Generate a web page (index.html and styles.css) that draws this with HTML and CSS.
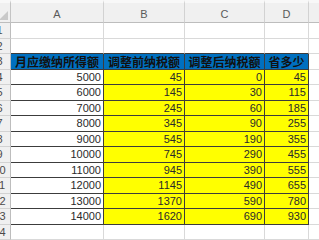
FILE: index.html
```html
<!DOCTYPE html>
<html>
<head>
<meta charset="utf-8">
<link rel="stylesheet" href="styles.css">
</head>
<body>
<div class="sheet">
  <div class="corner"><svg class="selall" width="9" height="9" viewBox="0 0 9 9"><polygon points="9,0 9,9 0,9" fill="#c9c9c9"/></svg></div>
  <div class="ch">A</div><div class="ch">B</div><div class="ch">C</div><div class="ch">D</div><div class="ch"></div>

  <div class="rh">1</div><div class="c"></div><div class="c"></div><div class="c"></div><div class="c"></div><div class="c"></div>
  <div class="rh">2</div><div class="c ab"></div><div class="c ab"></div><div class="c ab"></div><div class="c ab"></div><div class="c"></div>

  <div class="rh">3</div><div class="c t hd">月应缴纳所得额</div><div class="c t hd">调整前纳税额</div><div class="c t hd">调整后纳税额</div><div class="c t hd">省多少</div><div class="c"></div>

  <div class="rh">4</div><div class="c t n">5000</div><div class="c t n y">45</div><div class="c t n y">0</div><div class="c t n y">45</div><div class="c"></div>
  <div class="rh">5</div><div class="c t n">6000</div><div class="c t n y">145</div><div class="c t n y">30</div><div class="c t n y">115</div><div class="c"></div>
  <div class="rh">6</div><div class="c t n">7000</div><div class="c t n y">245</div><div class="c t n y">60</div><div class="c t n y">185</div><div class="c"></div>
  <div class="rh">7</div><div class="c t n">8000</div><div class="c t n y">345</div><div class="c t n y">90</div><div class="c t n y">255</div><div class="c"></div>
  <div class="rh">8</div><div class="c t n">9000</div><div class="c t n y">545</div><div class="c t n y">190</div><div class="c t n y">355</div><div class="c"></div>
  <div class="rh">9</div><div class="c t n">10000</div><div class="c t n y">745</div><div class="c t n y">290</div><div class="c t n y">455</div><div class="c"></div>
  <div class="rh">10</div><div class="c t n">11000</div><div class="c t n y">945</div><div class="c t n y">390</div><div class="c t n y">555</div><div class="c"></div>
  <div class="rh">11</div><div class="c t n">12000</div><div class="c t n y">1145</div><div class="c t n y">490</div><div class="c t n y">655</div><div class="c"></div>
  <div class="rh">12</div><div class="c t n">13000</div><div class="c t n y">1370</div><div class="c t n y">590</div><div class="c t n y">780</div><div class="c"></div>
  <div class="rh">13</div><div class="c t n">14000</div><div class="c t n y">1620</div><div class="c t n y">690</div><div class="c t n y">930</div><div class="c"></div>

  <div class="rh">14</div><div class="c"></div><div class="c"></div><div class="c"></div><div class="c"></div><div class="c"></div>
</div>
</body>
</html>
```

FILE: styles.css
```css
html, body {
  margin: 0;
  padding: 0;
  background: #ffffff;
  overflow: hidden;
  width: 319px;
  height: 240px;
}

.sheet {
  display: grid;
  grid-template-columns: 22px 93px 81px 80px 44px 60px;
  grid-template-rows: 23px repeat(14, 15.5px);
  margin-left: -11px;
  font-family: "Liberation Sans", Arial, sans-serif;
}

.sheet > div {
  box-sizing: border-box;
  min-width: 0;
  overflow: hidden;
  white-space: nowrap;
}

.corner {
  background: #f0f0f0;
  border-right: 1px solid #c4c4c4;
  border-bottom: 1px solid #bdbdbd;
  border-top: 3px solid #f8f8f8;
  display: flex;
  justify-content: flex-end;
  align-items: flex-end;
  padding: 0 2px 2px 0;
}

.selall {
  display: block;
}

.ch {
  background: #f0f0f0;
  border-top: 3px solid #f8f8f8;
  border-right: 1px solid #d2d2d2;
  border-bottom: 1px solid #bdbdbd;
  color: #5a5a5a;
  font-size: 11px;
  display: flex;
  justify-content: center;
  align-items: flex-end;
  padding-bottom: 2px;
  line-height: 12px;
}

.rh {
  background: #f0f0f0;
  border-right: 1px solid #bdbdbd;
  border-bottom: 1px solid #d2d2d2;
  color: #4a4a4a;
  font-size: 11px;
  display: flex;
  justify-content: center;
  align-items: center;
}

.c {
  border-right: 1px solid #d9d9d9;
  border-bottom: 1px solid #d9d9d9;
  font-size: 11px;
  color: #2a2a2a;
  display: flex;
  align-items: center;
}

.c.ab {
  border-bottom-color: #3c3c3c;
}

.c.t {
  border-right-color: #3c3c3c;
  border-bottom-color: #3c3c3c;
}

.n {
  justify-content: flex-end;
  padding-right: 2px;
}

.y {
  background: #ffff00;
}

.hd {
  background: #0070c0;
  color: #111111;
  font-family: "Noto Sans CJK SC", "Liberation Sans", sans-serif;
  font-weight: bold;
  font-size: 12px;
  justify-content: center;
  letter-spacing: 0;
}
```
